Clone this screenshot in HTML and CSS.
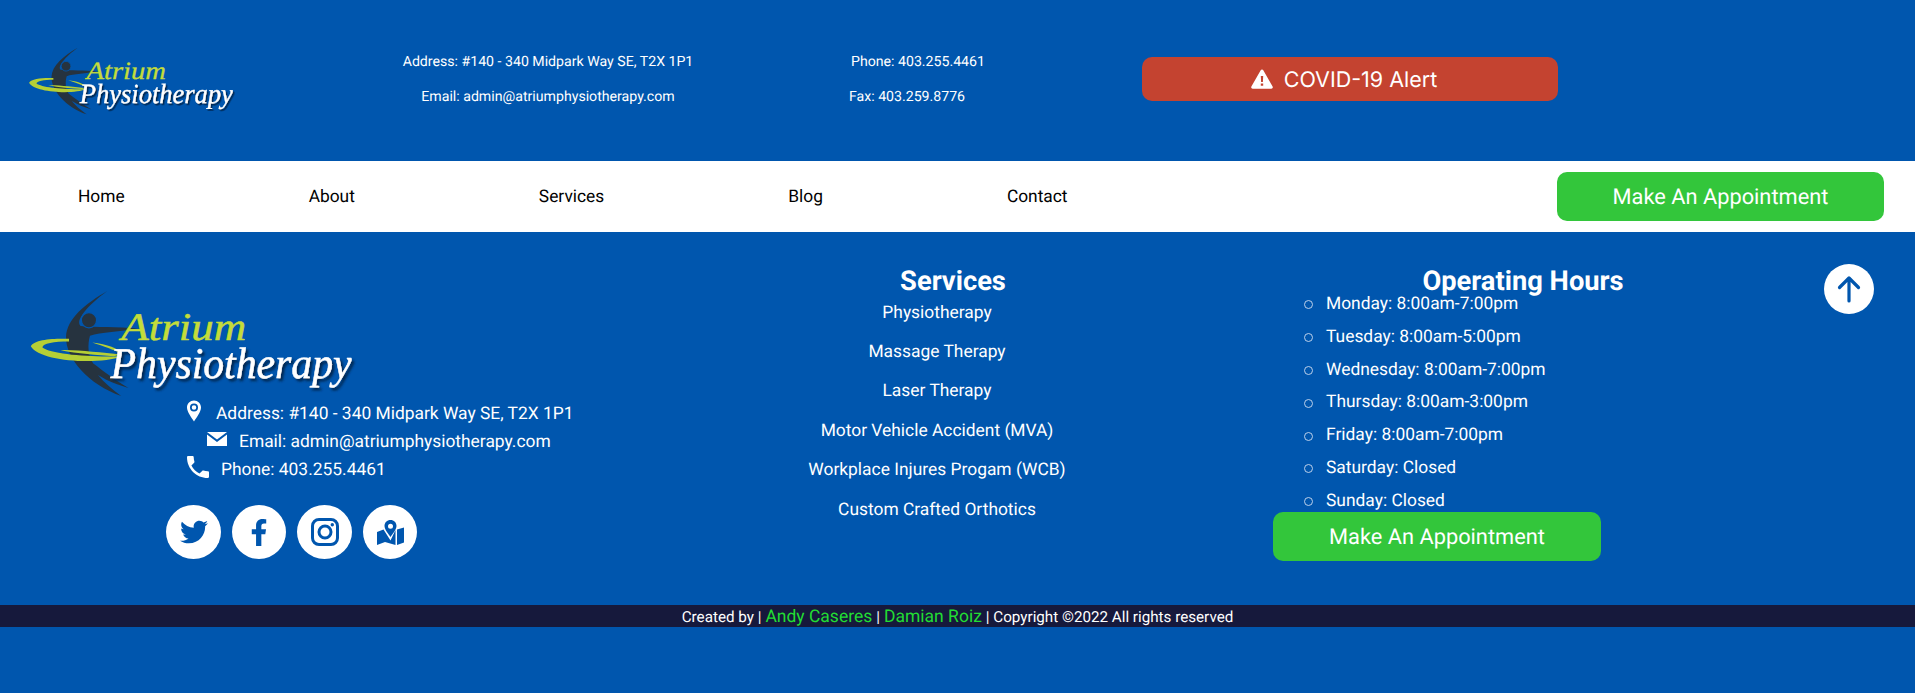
FILE: index.html
```html
<!DOCTYPE html>
<html lang="en">
<head>
<meta charset="utf-8">
<title>Atrium Physiotherapy</title>
<link rel="stylesheet" href="styles.css">
</head>
<body>
<svg class="defs" width="0" height="0" aria-hidden="true">
  <defs>
    <filter id="soft" x="-5%" y="-10%" width="115%" height="130%"><feDropShadow dx="7" dy="8" stdDeviation="3.500" flood-color="#00264f" flood-opacity="1"/></filter>
    <symbol id="logo" viewBox="80 50 990 340">
      <path class="logo-dark" d="M320 62C255 100 198 145 196 200C194 265 265 345 362 378C335 358 310 338 292 315C325 335 352 345 384 354C340 328 305 300 278 280C262 258 260 225 268 197C300 186 360 184 412 175C350 168 285 172 240 167C222 150 262 105 320 62Z"/>
      <circle class="logo-head" cx="265" cy="150" r="23"/>
      <path class="logo-lime" d="M90 228C100 208 160 204 205 206L205 214C160 214 125 220 125 232C150 252 270 262 362 258C300 285 115 275 90 228Z"/>
      <path class="logo-lime" d="M275 217C320 222 355 235 362 250C340 240 310 228 275 217Z"/>
      <path class="logo-lime" d="M180 240C230 238 300 248 362 253L340 258C290 255 230 250 180 240Z"/>
      <text class="logo-atrium" x="362" y="210" textLength="376" lengthAdjust="spacingAndGlyphs">Atrium</text>
      <text class="logo-physio" x="330" y="325" textLength="725" lengthAdjust="spacingAndGlyphs" filter="url(#soft)">Physiotherapy</text>
    </symbol>
  </defs>
</svg>

<header class="top">
  <a class="top-logo" href="#"><svg class="logo-small"><use href="#logo"/></svg></a>
  <div class="top-col top-col-address">
    <p>Address: #140 - 340 Midpark Way SE, T2X 1P1</p>
    <p>Email: admin@atriumphysiotherapy.com</p>
  </div>
  <div class="top-col top-col-phone">
    <p class="phone-line">Phone: 403.255.4461</p>
    <p>Fax: 403.259.8776</p>
  </div>
  <a class="alert" href="#">
    <svg class="alert-icon" viewBox="0 0 22 20"><path class="i-white" fill-rule="evenodd" d="M11 0.5C11.6 0.5 12 .8 12.3 1.3L21.6 17.6C22.2 18.6 21.5 19.8 20.3 19.8H1.7C.5 19.8-.2 18.6.4 17.6L9.7 1.3C10 .8 10.4 .5 11 .5ZM9.8 7L10.1 13H11.9L12.2 7ZM9.8 14.4V16.8H12.2V14.4Z"/></svg>
    <span class="alert-text">COVID-19 Alert</span>
  </a>
</header>

<nav class="nav">
  <a class="nav-link" href="#">Home</a>
  <a class="nav-link" href="#">About</a>
  <a class="nav-link" href="#">Services</a>
  <a class="nav-link" href="#">Blog</a>
  <a class="nav-link" href="#">Contact</a>
  <a class="cta cta-nav" href="#">Make An Appointment</a>
</nav>

<footer class="foot">
  <section class="foot-left">
    <svg class="logo-large"><use href="#logo"/></svg>
    <div class="line line-address">
      <svg class="ic-pin" viewBox="0 0 16 24"><path class="i-white" fill-rule="evenodd" d="M8 0C3.6 0 0 3.5 0 7.9C0 13 5.5 19.8 8 24C10.500 19.800 16 13 16 7.900C16 3.500 12.400 0 8 0ZM8 3.300A4.600 4.600 0 1 1 8 12.500A4.600 4.600 0 1 1 8 3.300ZM8 5.300A2.600 2.600 0 1 0 8 10.500A2.600 2.600 0 1 0 8 5.300Z"/></svg>
      <span class="line-text">Address: #140 - 340 Midpark Way SE, T2X 1P1</span>
    </div>
    <div class="line line-email">
      <svg class="ic-mail" viewBox="0 0 20 14"><path class="i-white" d="M0 0H20L10 7.500ZM0 2.400L10 9.900L20 2.400V14H0Z"/></svg>
      <span class="line-text">Email: admin@atriumphysiotherapy.com</span>
    </div>
    <div class="line line-phone">
      <svg class="ic-phone" viewBox="3 3 18 18"><path class="i-white" d="M6.620 10.790c1.440 2.830 3.760 5.140 6.590 6.590l2.200-2.200c.27-.27.67-.36 1.020-.24 1.120.37 2.330.57 3.570.57.55 0 1 .45 1 1V20c0 .55-.45 1-1 1-9.390 0-17-7.610-17-17 0-.55.45-1 1-1h3.500c.55 0 1 .45 1 1 0 1.250.2 2.450.57 3.570.11.35.03.74-.25 1.020l-2.200 2.200z"/></svg>
      <span class="line-text">Phone: 403.255.4461</span>
    </div>
    <div class="social">
      <a class="soc soc-wide" href="#"><svg class="ic-tw" viewBox="0 0 512 512"><path class="i-blue" d="M459.370 151.716c.325 4.548.325 9.097.325 13.645 0 138.720-105.583 298.558-298.558 298.558-59.452 0-114.680-17.219-161.137-47.106 8.447.974 16.568 1.299 25.340 1.299 49.055 0 94.213-16.568 130.274-44.832-46.132-.975-84.792-31.188-98.112-72.772 6.498.974 12.995 1.624 19.818 1.624 9.421 0 18.843-1.300 27.614-3.573-48.081-9.747-84.143-51.980-84.143-102.985v-1.299c13.969 7.797 30.214 12.670 47.431 13.319-28.264-18.843-46.781-51.005-46.781-87.391 0-19.492 5.197-37.360 14.294-52.954 51.655 63.675 129.300 105.258 216.365 109.807-1.624-7.797-2.599-15.918-2.599-24.040 0-57.828 46.782-104.934 104.934-104.934 30.213 0 57.502 12.670 76.670 33.137 23.715-4.548 46.456-13.320 66.599-25.340-7.798 24.366-24.366 44.833-46.132 57.827 21.117-2.273 41.584-8.122 60.426-16.243-14.292 20.791-32.161 39.308-52.628 54.253z"/></svg></a>
      <a class="soc" href="#"><svg class="ic-fb" viewBox="0 0 320 512"><path class="i-blue" d="M279.140 288l14.220-92.660h-88.910v-60.130c0-25.350 12.420-50.060 52.240-50.060h40.420V6.260S260.430 0 225.360 0c-73.220 0-121.080 44.380-121.080 124.720v70.620H22.890V288h81.390v224h100.170V288z"/></svg></a>
      <a class="soc soc-wide" href="#"><svg class="ic-ig" viewBox="0 0 28 28"><rect class="i-line" x="1.500" y="1.500" width="25" height="25" rx="6.500"/><circle class="i-line" cx="14" cy="14" r="6"/><circle class="i-blue" cx="21.300" cy="6.700" r="1.700"/></svg></a>
      <a class="soc" href="#"><svg class="ic-map" viewBox="0 0 27 25"><path class="i-blue" d="M0 12L6.500 9.500L13.500 20.500L18.500 10V25L8 22L0 25Z"/><path class="i-blue" d="M20 9.500L27 7.500V22.500L20 25Z"/><path class="i-blue" fill-rule="evenodd" d="M13.500 0C10 0 7.500 2.600 7.500 6C7.500 9.500 11.500 14 13.500 17C15.500 14 19.500 9.500 19.500 6C19.500 2.600 17 0 13.500 0ZM13.500 3.700A2.500 2.500 0 1 1 13.500 8.700A2.500 2.500 0 1 1 13.500 3.700Z"/></svg></a>
    </div>
  </section>

  <section class="foot-services">
    <h2>Services</h2>
    <ul>
      <li>Physiotherapy</li>
      <li>Massage Therapy</li>
      <li>Laser Therapy</li>
      <li>Motor Vehicle Accident (MVA)</li>
      <li>Workplace Injures Progam (WCB)</li>
      <li>Custom Crafted Orthotics</li>
    </ul>
  </section>

  <section class="foot-hours">
    <h2>Operating Hours</h2>
    <ul>
      <li>Monday: 8:00am-7:00pm</li>
      <li>Tuesday: 8:00am-5:00pm</li>
      <li>Wednesday: 8:00am-7:00pm</li>
      <li>Thursday: 8:00am-3:00pm</li>
      <li>Friday: 8:00am-7:00pm</li>
      <li>Saturday: Closed</li>
      <li>Sunday: Closed</li>
    </ul>
    <a class="cta cta-foot" href="#">Make An Appointment</a>
  </section>

  <a class="to-top" href="#"><svg viewBox="0 0 24 28"><path class="i-arrow" d="M12 26V3M2.500 12.500L12 3L21.500 12.500"/></svg></a>
</footer>

<div class="credit">
  <span>Created by | </span><a href="#">Andy Caseres</a><span> | </span><a href="#">Damian Roiz</a><span> | Copyright ©2022 All rights reserved</span>
</div>
</body>
</html>
```
FILE: styles.css
```css
* { box-sizing: border-box; }
html, body { margin: 0; padding: 0; }
body {
  min-height: 693px;
  background: #0056ae;
  color: #fff;
  font-family: Roboto, "Liberation Sans", sans-serif;
  text-rendering: geometricPrecision;
}
a { color: inherit; text-decoration: none; }
p, h2, ul { margin: 0; padding: 0; }
.defs { position: absolute; }

.logo-dark { fill: #26333f; }
.logo-head { fill: #26333f; stroke: #0056ae; stroke-width: 4; }
.logo-lime { fill: #b5cf35; }
.logo-atrium { fill: #c3dc3a; stroke: #c3dc3a; stroke-width: 1.500; font: italic 118px "Liberation Serif", serif; }
.logo-physio { fill: #fff; stroke: #fff; stroke-width: 1.500; font: italic 132px "Liberation Serif", serif; }
.i-white { fill: #fff; }
.i-blue { fill: #0056ae; }
.i-line { fill: none; stroke: #0056ae; stroke-width: 3; }
.i-arrow { fill: none; stroke: #0056ae; stroke-width: 3.200; stroke-linecap: round; stroke-linejoin: round; }

.top {
  display: flex;
  align-items: center;
  height: 161px;
  padding-left: 27px;
}
.top-logo { display: block; width: 321px; height: 72px; }
.logo-small { display: block; width: 209px; height: 72px; }
.top-col {
  margin-top: -2px;
  font-size: 14.150px;
  line-height: 34.500px;
  text-align: center;
}
.top-col-address { width: 400px; }
.top-col-phone { width: 318px; }
.phone-line { padding-left: 22px; }
.alert {
  display: flex;
  align-items: center;
  justify-content: center;
  gap: 11px;
  width: 416px;
  height: 44px;
  margin: -4px 0 0 76px;
  padding-right: 12px;
  border-radius: 10px;
  background: #c44330;
  font-family: Inter, Roboto, sans-serif;
  font-size: 21.500px;
}
.alert-text { padding-top: 2px; }
.alert-icon { width: 22px; height: 20px; }

.nav {
  display: flex;
  align-items: center;
  gap: 184px;
  height: 71px;
  padding: 0 31px 0 78px;
  background: #fff;
  color: #000;
  font-size: 17.350px;
}
.cta {
  display: flex;
  align-items: center;
  justify-content: center;
  height: 49px;
  padding-top: 2px;
  border-radius: 10px;
  background: #33c63b;
  color: #fff;
  font-size: 21.800px;
}
.cta-nav { width: 327px; margin-left: auto; }

.foot {
  position: relative;
  display: flex;
  height: 373px;
  font-size: 17.400px;
}
.foot h2 { font-size: 27.300px; font-weight: 700; line-height: 32px; text-align: center; }

.foot-left { width: 700px; padding: 55px 0 0 27px; }
.logo-large { display: block; width: 330px; height: 113px; margin-bottom: -1px; }
.line { display: flex; align-items: center; height: 28px; }
.line-text { padding-top: 2px; }
.line-address { padding-left: 160px; gap: 15px; }
.line-email { padding-left: 180px; gap: 12px; }
.line-phone { padding-left: 160px; gap: 12px; }
.ic-pin { width: 14px; height: 22px; margin-top: -5px; }
.ic-mail { width: 20px; height: 14px; margin-top: -5px; }
.ic-phone { width: 22px; height: 22px; margin-top: -5px; }
.social { display: flex; gap: 11px; margin: 22px 0 0 139px; }
.soc {
  display: flex;
  align-items: center;
  justify-content: center;
  width: 54px;
  height: 54px;
  border-radius: 50%;
  background: #fff;
}
.soc-wide { width: 55px; }
.ic-tw { width: 28px; height: 28px; }
.ic-fb { width: 18px; height: 27px; }
.ic-ig { width: 28px; height: 28px; }
.ic-map { width: 27px; height: 25px; }

.foot-services { width: 474px; padding-top: 33px; }
.foot-services h2 { padding-left: 32px; }
.foot-services ul { list-style: none; text-align: center; margin-top: -3.500px; }
.foot-services li { font-size: 17.400px; line-height: 39.400px; }

.foot-hours { width: 698px; padding-top: 33px; }
.foot-hours ul { list-style: none; padding-left: 152px; margin-top: -9px; }
.foot-hours li { display: flex; align-items: center; font-size: 17.400px; line-height: 32.800px; }
.foot-hours li::before {
  content: "";
  width: 7px;
  height: 7px;
  margin: 1px 13.500px 0 -22.500px;
  border: 1px solid #bcd0ea;
  border-radius: 50%;
}
.cta-foot { width: 328px; margin: -5.500px 0 0 99px; }

.to-top {
  position: absolute;
  top: 32px;
  left: 1824px;
  display: flex;
  align-items: center;
  justify-content: center;
  width: 50px;
  height: 50px;
  border-radius: 50%;
  background: #fff;
}
.to-top svg { width: 24px; height: 28px; }

.credit {
  display: flex;
  justify-content: center;
  align-items: center;
  gap: 4px;
  height: 22px;
  padding-top: 2px;
  background: #16193c;
  font-size: 15.200px;
}
.credit a { color: #22dd33; font-size: 17.500px; }
```
